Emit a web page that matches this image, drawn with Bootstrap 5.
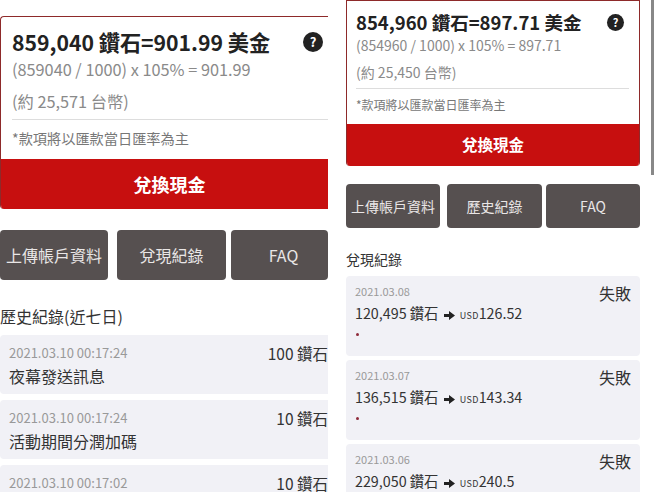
<!DOCTYPE html>
<html lang="zh-Hant">
<head>
    <meta charset="UTF-8">
    <meta name="viewport" content="width=device-width, initial-scale=1.0">
    <title>兌換現金</title>
    <link rel="stylesheet" href="https://cdn.jsdelivr.net/npm/bootstrap@5.3.0/dist/css/bootstrap.min.css">
    <style>
        html, body {
            height: 492px;
            overflow: hidden;
        }

        body {
            font-family: "Noto Sans CJK TC", "Noto Sans", sans-serif;
            color: #333;
            background-color: #fff;
        }

        .pane {
            height: 492px;
            overflow: hidden;
            flex: none;
        }

        .pane-left {
            width: 328px;
            padding-top: 16px;
        }

        .pane-right {
            width: 294px;
            margin-left: 18px;
        }

        .pane-bar {
            width: 3px;
            height: 175px;
            margin-left: 11px;
            background-color: #888;
            flex: none;
        }

        .cash-box {
            border: 1px solid #8e2a2a;
            border-bottom: 0;
            border-radius: 4px;
            overflow: hidden;
        }

        .pane-left .cash-box {
            border-right: 0;
            border-radius: 4px 0 0 4px;
        }

        .pane-right .cash-box {
            border-top-left-radius: 0;
            border-top-right-radius: 0;
        }

        .pane-left .cash-body {
            height: 142px;
            padding: 11px 0 0 11px;
        }

        .pane-right .cash-body {
            height: 123px;
            padding: 8px 10px 0 9px;
        }

        .cash-title {
            font-weight: 700;
            color: #222;
            margin: 0;
            white-space: nowrap;
        }

        .pane-left .cash-title {
            font-size: 21.2px;
            line-height: 28px;
        }

        .pane-right .cash-title {
            font-size: 18.5px;
            line-height: 26px;
        }

        .help-dot {
            background-color: #222;
            color: #fff;
            border-radius: 50%;
            font-weight: 700;
            display: flex;
            align-items: center;
            justify-content: center;
            flex: none;
        }

        .pane-left .help-dot {
            width: 20px;
            height: 20px;
            font-size: 13px;
            margin-right: 5px;
        }

        .pane-right .help-dot {
            width: 17px;
            height: 17px;
            font-size: 11px;
            margin-right: 5px;
        }

        .cash-note {
            color: #8a8a8a;
            margin: 0;
            white-space: nowrap;
        }

        .pane-left .cash-note {
            font-size: 16.3px;
            line-height: 26px;
        }

        .pane-left .cash-note + .cash-note {
            margin-top: 6px;
        }

        .pane-right .cash-note {
            font-size: 14px;
            line-height: 20px;
        }

        .pane-right .cash-note + .cash-note {
            margin-top: 7px;
        }

        .cash-line {
            border-top: 1px solid #ddd;
        }

        .pane-left .cash-line {
            margin: 5px 0 0;
            padding-top: 6px;
        }

        .pane-right .cash-line {
            margin: 6px 0 0;
            padding-top: 6px;
        }

        .cash-fine {
            color: #777;
            margin: 0;
        }

        .pane-left .cash-fine {
            font-size: 14.2px;
            line-height: 24px;
        }

        .pane-right .cash-fine {
            font-size: 12px;
            line-height: 20px;
        }

        .cash-btn {
            display: block;
            width: 100%;
            border: 0;
            border-radius: 0;
            padding: 0;
            background-color: #c70f0f;
            color: #fff;
            font-weight: 700;
        }

        .pane-left .cash-btn {
            height: 50px;
            font-size: 18px;
            padding-left: 10px;
        }

        .pane-right .cash-btn {
            height: 42px;
            font-size: 15.5px;
        }

        .side-btn {
            background-color: #565050;
            border: 0;
            border-radius: 4px;
            color: #e9e6e6;
            padding: 0;
            white-space: nowrap;
        }

        .pane-left .side-btn {
            height: 50px;
            font-size: 16px;
            width: 108px;
        }

        .pane-left .side-btn:nth-child(2) {
            width: 109px;
            margin: 0 5px 0 9px;
        }

        .pane-left .side-btn:nth-child(3) {
            width: 97px;
            padding-left: 8px;
        }

        .pane-right .side-btn {
            height: 44px;
            font-size: 14px;
            width: 94px;
        }

        .pane-right .side-btn:nth-child(2) {
            width: 95px;
            margin: 0 4px 0 7px;
        }

        .pane-left .btn-row {
            margin-top: 21px;
        }

        .pane-right .btn-row {
            margin-top: 18px;
        }

        .list-title {
            color: #333;
            font-weight: 400;
            margin: 0;
        }

        .pane-left .list-title {
            font-size: 16px;
            line-height: 24px;
            margin-top: 24px;
        }

        .pane-right .list-title {
            font-size: 14px;
            line-height: 20px;
            margin-top: 21px;
        }

        .log-list {
            margin-top: 7px;
        }

        .log-row {
            background-color: #f1f1f6;
            border-radius: 4px;
        }

        .pane-left .log-row {
            height: 59px;
            padding: 8px 0 0 9px;
            margin-bottom: 6px;
            border-radius: 4px 0 0 4px;
        }

        .pane-right .log-row {
            height: 80px;
            padding: 5px 9px 0;
            margin-bottom: 4px;
        }

        .log-date {
            color: #999;
            line-height: 20px;
        }

        .pane-left .log-date {
            font-size: 13px;
        }

        .pane-right .log-date {
            font-size: 11px;
        }

        .log-amount {
            color: #333;
            white-space: nowrap;
        }

        .pane-left .log-amount {
            font-size: 15.5px;
            line-height: 20px;
        }

        .pane-right .log-amount {
            font-size: 16px;
            line-height: 24px;
        }

        .log-name {
            color: #333;
            font-size: 16px;
            line-height: 26px;
        }

        .log-value {
            color: #333;
            font-size: 14.3px;
            line-height: 24px;
            white-space: nowrap;
        }

        .log-arrow {
            width: 11px;
            height: 9px;
            margin: 0 2px;
            vertical-align: -0.5px;
            fill: #222;
        }

        .log-unit {
            font-size: 9px;
            letter-spacing: 0.3px;
        }

        .log-dot {
            width: 3px;
            height: 3px;
            border-radius: 50%;
            background-color: #8e2a3a;
            margin: 5px 0 0 1px;
        }
    </style>
</head>
<body>

<div class="d-flex">
    <div class="pane pane-left">
        <div class="cash-box">
            <div class="cash-body">
                <div class="d-flex justify-content-between align-items-center">
                    <h1 class="cash-title">859,040 鑽石=901.99 美金</h1>
                    <span class="help-dot">?</span>
                </div>
                <p class="cash-note">(859040 / 1000) x 105% = 901.99</p>
                <p class="cash-note">(約 25,571 台幣)</p>
                <div class="cash-line">
                    <p class="cash-fine">*款項將以匯款當日匯率為主</p>
                </div>
            </div>
            <button class="btn cash-btn">兌換現金</button>
        </div>

        <div class="d-flex btn-row">
            <button class="btn side-btn">上傳帳戶資料</button>
            <button class="btn side-btn">兌現紀錄</button>
            <button class="btn side-btn">FAQ</button>
        </div>

        <h2 class="list-title">歷史紀錄(近七日)</h2>

        <div class="log-list">
            <div class="log-row d-flex justify-content-between">
                <div>
                    <div class="log-date">2021.03.10 00:17:24</div>
                    <div class="log-name">夜幕發送訊息</div>
                </div>
                <div class="log-amount">100 鑽石</div>
            </div>
            <div class="log-row d-flex justify-content-between">
                <div>
                    <div class="log-date">2021.03.10 00:17:24</div>
                    <div class="log-name">活動期間分潤加碼</div>
                </div>
                <div class="log-amount">10 鑽石</div>
            </div>
            <div class="log-row d-flex justify-content-between">
                <div>
                    <div class="log-date">2021.03.10 00:17:02</div>
                </div>
                <div class="log-amount">10 鑽石</div>
            </div>
        </div>
    </div>

    <div class="pane pane-right">
        <div class="cash-box">
            <div class="cash-body">
                <div class="d-flex justify-content-between align-items-center">
                    <h1 class="cash-title">854,960 鑽石=897.71 美金</h1>
                    <span class="help-dot">?</span>
                </div>
                <p class="cash-note">(854960 / 1000) x 105% = 897.71</p>
                <p class="cash-note">(約 25,450 台幣)</p>
                <div class="cash-line">
                    <p class="cash-fine">*款項將以匯款當日匯率為主</p>
                </div>
            </div>
            <button class="btn cash-btn">兌換現金</button>
        </div>

        <div class="d-flex btn-row">
            <button class="btn side-btn">上傳帳戶資料</button>
            <button class="btn side-btn">歷史紀錄</button>
            <button class="btn side-btn">FAQ</button>
        </div>

        <h2 class="list-title">兌現紀錄</h2>

        <div class="log-list">
            <div class="log-row d-flex justify-content-between">
                <div>
                    <div class="log-date">2021.03.08</div>
                    <div class="log-value">120,495 鑽石 <svg class="log-arrow" viewBox="0 0 11 9"><path d="M0 3h5V0l6 4.5L5 9V6H0z"/></svg> <span class="log-unit">USD</span>126.52</div>
                    <div class="log-dot"></div>
                </div>
                <div class="log-amount">失敗</div>
            </div>
            <div class="log-row d-flex justify-content-between">
                <div>
                    <div class="log-date">2021.03.07</div>
                    <div class="log-value">136,515 鑽石 <svg class="log-arrow" viewBox="0 0 11 9"><path d="M0 3h5V0l6 4.5L5 9V6H0z"/></svg> <span class="log-unit">USD</span>143.34</div>
                    <div class="log-dot"></div>
                </div>
                <div class="log-amount">失敗</div>
            </div>
            <div class="log-row d-flex justify-content-between">
                <div>
                    <div class="log-date">2021.03.06</div>
                    <div class="log-value">229,050 鑽石 <svg class="log-arrow" viewBox="0 0 11 9"><path d="M0 3h5V0l6 4.5L5 9V6H0z"/></svg> <span class="log-unit">USD</span>240.5</div>
                    <div class="log-dot"></div>
                </div>
                <div class="log-amount">失敗</div>
            </div>
        </div>
    </div>

    <div class="pane-bar"></div>
</div>

<script src="https://cdn.jsdelivr.net/npm/bootstrap@5.3.0/dist/js/bootstrap.bundle.min.js"></script>
</body>
</html>
